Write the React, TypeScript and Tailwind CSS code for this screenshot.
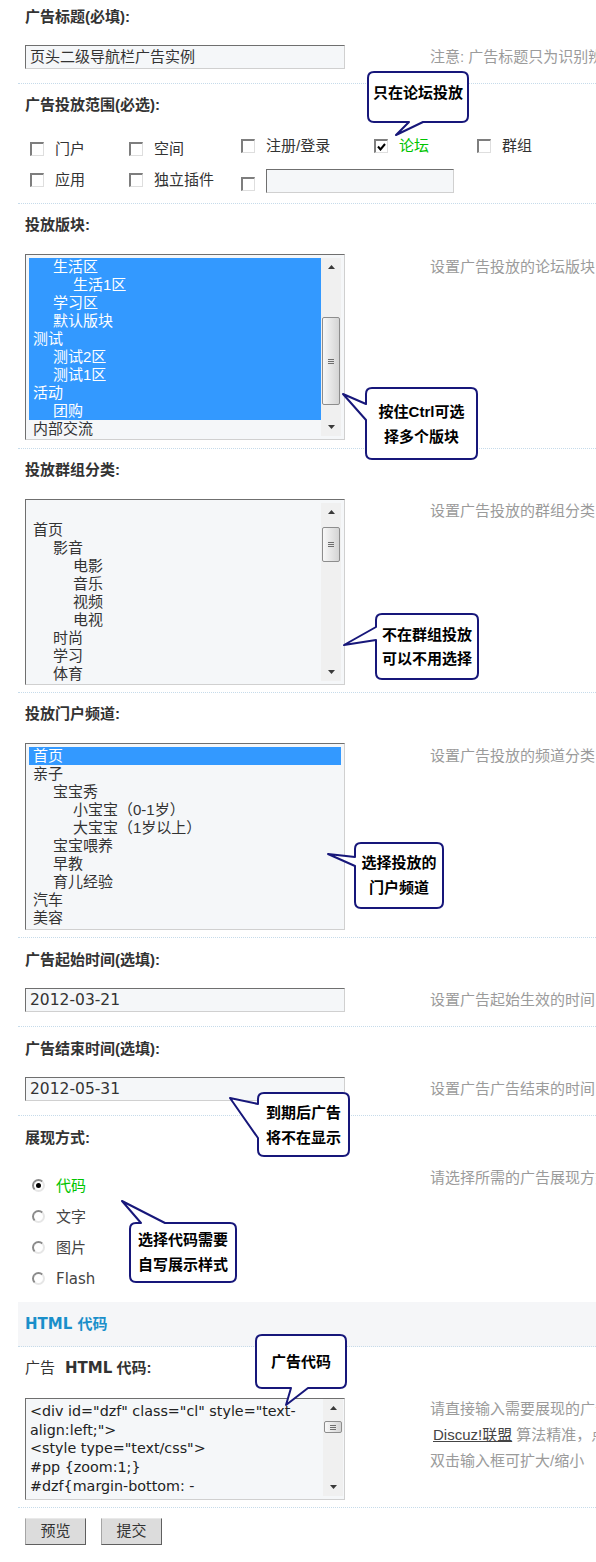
import React from "react";

const SANS = "font-['Liberation_Sans','Noto_Sans_CJK_SC',sans-serif]";
const DEJA = "font-['DejaVu_Sans','Noto_Sans_CJK_SC',sans-serif]";
const SEP = "border-b border-dotted border-[#c6dbea]";
const FIELD =
  "border border-t-[#6f6f6f] border-l-[#6f6f6f] border-r-[#d0d0d0] border-b-[#d0d0d0] bg-[#f5f7f9]";
const IND = ["pl-[4px]", "pl-[24px]", "pl-[44px]"];

function Label({ children }: { children: React.ReactNode }) {
  return (
    <div className="h-[18px] whitespace-nowrap text-[15px] font-bold leading-[18px] text-[#333]">
      {children}
    </div>
  );
}

function Hint({ children, cls }: { children: React.ReactNode; cls: string }) {
  return (
    <div className={`ml-[85px] shrink-0 whitespace-nowrap text-[15px] leading-[18px] text-[#9b9b9b] ${cls}`}>
      {children}
    </div>
  );
}

function Check({ on }: { on?: boolean }) {
  return (
    <span className="flex h-[14px] w-[14px] shrink-0 items-center justify-center border-b border-l-2 border-r border-t-2 border-b-[#dedede] border-l-[#7e7e7e] border-r-[#dedede] border-t-[#7e7e7e] bg-white">
      {on && (
        <svg width="9" height="8" viewBox="0 0 9 8">
          <path d="M1 3.5 L3.5 6.5 L8 1" fill="none" stroke="#000" strokeWidth="2" />
        </svg>
      )}
    </span>
  );
}

function Radio({ on }: { on?: boolean }) {
  return (
    <span className="flex h-[13px] w-[13px] shrink-0 items-center justify-center rounded-full border-2 border-b-[#e6e6e6] border-l-[#8a8a8a] border-r-[#e6e6e6] border-t-[#8a8a8a] bg-white">
      {on && <span className="h-[5px] w-[5px] rounded-full bg-black" />}
    </span>
  );
}

function Arrow({ down }: { down?: boolean }) {
  return (
    <div className="flex h-[18px] shrink-0 items-center justify-center">
      <svg width="7" height="4" viewBox="0 0 7 4">
        <path d={down ? "M0 0L3.5 4L7 0Z" : "M0 4L3.5 0L7 4Z"} fill="#3a3a3a" />
      </svg>
    </div>
  );
}

function ScrollBar({ thumb, cls }: { thumb: string; cls?: string }) {
  return (
    <div className={`flex w-[20px] shrink-0 flex-col bg-[#f0f0f0] ${cls ?? ""}`}>
      <Arrow />
      <div className="flex-1 px-[1px]">
        <div
          className={`flex w-full items-center justify-center rounded-[2px] border border-[#8d8d8d] bg-linear-to-r from-[#f8f8f8] to-[#d4d4d4] ${thumb}`}
        >
          <div className="flex flex-col gap-[1px]">
            <span className="block h-[1px] w-[6px] bg-[#6e6e6e]" />
            <span className="block h-[1px] w-[6px] bg-[#6e6e6e]" />
            <span className="block h-[1px] w-[6px] bg-[#6e6e6e]" />
          </div>
        </div>
      </div>
      <Arrow down />
    </div>
  );
}

type Item = { t: string; l: number; sel?: boolean };

function ListBox({ items, h, scroll }: { items: Item[]; h: string; scroll?: string }) {
  return (
    <div className={`flex w-[320px] shrink-0 p-[3px] ${h} ${FIELD}`}>
      <div className="flex-1 overflow-hidden">
        {items.map((it, i) => (
          <div
            key={i}
            className={`h-[18px] whitespace-nowrap text-[15px] leading-[18px] ${IND[it.l]} ${
              it.sel ? "bg-[#3399ff] text-white" : "text-[#333]"
            }`}
          >
            {it.t || "\u00a0"}
          </div>
        ))}
      </div>
      {scroll && <ScrollBar thumb={scroll} />}
    </div>
  );
}

function CItem({
  w,
  pad,
  label,
  on,
  green,
}: {
  w?: string;
  pad?: string;
  label: string;
  on?: boolean;
  green?: boolean;
}) {
  return (
    <div className={`flex h-[24px] shrink-0 items-center ${w ?? ""} ${pad ?? ""}`}>
      <Check on={on} />
      <span className={`ml-[11px] text-[15px] leading-[18px] ${green ? "text-[#00c400]" : "text-[#333]"}`}>
        {label}
      </span>
    </div>
  );
}

type Co = {
  x: number;
  y: number;
  w: number;
  h: number;
  side: "top" | "bottom" | "left";
  a: number;
  b: number;
  tx: number;
  ty: number;
  lines: string[];
  top: number;
  lh: number;
};

const callouts: Co[] = [
  { x: 368, y: 72, w: 100, h: 50, side: "bottom", a: 409, b: 423, tx: 396, ty: 135, lines: ["只在论坛投放"], top: 80, lh: 26 },
  { x: 366, y: 388, w: 111, h: 71, side: "left", a: 404, b: 420, tx: 343, ty: 394, lines: ["按住Ctrl可选", "择多个版块"], top: 399, lh: 25 },
  { x: 376, y: 614, w: 102, h: 65, side: "left", a: 627, b: 640, tx: 344, ty: 645, lines: ["不在群组投放", "可以不用选择"], top: 623, lh: 24 },
  { x: 355, y: 843, w: 88, h: 65, side: "left", a: 857, b: 866, tx: 328, ty: 854, lines: ["选择投放的", "门户频道"], top: 850, lh: 25 },
  { x: 258, y: 1093, w: 91, h: 63, side: "left", a: 1104, b: 1138, tx: 230, ty: 1098, lines: ["到期后广告", "将不在显示"], top: 1100, lh: 25 },
  { x: 130, y: 1223, w: 106, h: 59, side: "top", a: 141, b: 165, tx: 122, ty: 1201, lines: ["选择代码需要", "自写展示样式"], top: 1227, lh: 25 },
  { x: 256, y: 1335, w: 90, h: 53, side: "bottom", a: 291, b: 308, tx: 286, ty: 1405, lines: ["广告代码"], top: 1349, lh: 26 },
];

function calloutPath(c: Co) {
  const { x, y, w, h, side, a, b, tx, ty } = c;
  const r = 6;
  const R = x + w;
  const B = y + h;
  let d = `M${x + r} ${y}`;
  if (side === "top") d += ` L${a} ${y} L${tx} ${ty} L${b} ${y}`;
  d += ` L${R - r} ${y} Q${R} ${y} ${R} ${y + r} L${R} ${B - r} Q${R} ${B} ${R - r} ${B}`;
  if (side === "bottom") d += ` L${b} ${B} L${tx} ${ty} L${a} ${B}`;
  d += ` L${x + r} ${B} Q${x} ${B} ${x} ${B - r}`;
  if (side === "left") d += ` L${x} ${b} L${tx} ${ty} L${x} ${a}`;
  d += ` L${x} ${y + r} Q${x} ${y} ${x + r} ${y} Z`;
  return d;
}

const forum: Item[] = [
  { t: "生活区", l: 1, sel: true },
  { t: "生活1区", l: 2, sel: true },
  { t: "学习区", l: 1, sel: true },
  { t: "默认版块", l: 1, sel: true },
  { t: "测试", l: 0, sel: true },
  { t: "测试2区", l: 1, sel: true },
  { t: "测试1区", l: 1, sel: true },
  { t: "活动", l: 0, sel: true },
  { t: "团购", l: 1, sel: true },
  { t: "内部交流", l: 0 },
];

const groups: Item[] = [
  { t: "", l: 0 },
  { t: "首页", l: 0 },
  { t: "影音", l: 1 },
  { t: "电影", l: 2 },
  { t: "音乐", l: 2 },
  { t: "视频", l: 2 },
  { t: "电视", l: 2 },
  { t: "时尚", l: 1 },
  { t: "学习", l: 1 },
  { t: "体育", l: 1 },
];

const portal: Item[] = [
  { t: "首页", l: 0, sel: true },
  { t: "亲子", l: 0 },
  { t: "宝宝秀", l: 1 },
  { t: "小宝宝（0-1岁）", l: 2 },
  { t: "大宝宝（1岁以上）", l: 2 },
  { t: "宝宝喂养", l: 1 },
  { t: "早教", l: 1 },
  { t: "育儿经验", l: 1 },
  { t: "汽车", l: 0 },
  { t: "美容", l: 0 },
];

const code = [
  '<div id="dzf" class="cl" style="text-',
  'align:left;">',
  '<style type="text/css">',
  "#pp {zoom:1;}",
  "#dzf{margin-bottom: -",
];

const radios = [
  { t: "代码", on: true },
  { t: "文字" },
  { t: "图片" },
  { t: "Flash" },
];

export default function App() {
  return (
    <div className={`relative h-[1562px] w-[596px] overflow-hidden bg-white pl-[18px] ${SANS}`}>
      {/* 广告标题 */}
      <section className={`${SEP} pb-[14px] pl-[7px] pt-[8px]`}>
        <Label>广告标题(必填):</Label>
        <div className="mt-[19px] flex items-start">
          <div className={`h-[24px] w-[320px] shrink-0 pl-[4px] text-[15px] leading-[22px] text-[#333] ${FIELD}`}>
            页头二级导航栏广告实例
          </div>
          <Hint cls="mt-[3px]">注意: 广告标题只为识别辨别不同广告条目之用，并不在广告中显示</Hint>
        </div>
      </section>

      {/* 投放范围 */}
      <section className={`${SEP} pb-[9px] pl-[7px] pt-[12px]`}>
        <Label>广告投放范围(必选):</Label>
        <div className="mt-[20px] pl-[5px]">
          <div className="flex h-[24px] items-start">
            <CItem w="w-[99px]" pad="pt-[6px]" label="门户" />
            <CItem w="w-[112px]" pad="pt-[6px]" label="空间" />
            <CItem w="w-[133px]" label="注册/登录" />
            <CItem w="w-[103px]" label="论坛" on green />
            <CItem label="群组" />
          </div>
          <div className="mt-[12px] flex h-[24px] items-start">
            <CItem w="w-[99px]" pad="pb-[4px]" label="应用" />
            <CItem w="w-[112px]" pad="pb-[4px]" label="独立插件" />
            <div className="flex items-start">
              <span className="mt-[7px]">
                <Check />
              </span>
              <div className={`-mt-[1px] ml-[11px] h-[24px] w-[188px] ${FIELD}`} />
            </div>
          </div>
        </div>
      </section>

      {/* 投放版块 */}
      <section className={`${SEP} pb-[8px] pl-[7px] pt-[12px]`}>
        <Label>投放版块:</Label>
        <div className="mt-[20px] flex items-start">
          <ListBox items={forum} h="h-[186px]" scroll="mt-[41px] h-[88px]" />
          <Hint cls="mt-[4px]">设置广告投放的论坛版块</Hint>
        </div>
      </section>

      {/* 投放群组分类 */}
      <section className={`${SEP} pb-[7px] pl-[7px] pt-[12px]`}>
        <Label>投放群组分类:</Label>
        <div className="mt-[20px] flex items-start">
          <ListBox items={groups} h="h-[186px]" scroll="mt-[6px] h-[35px]" />
          <Hint cls="mt-[3px]">设置广告投放的群组分类</Hint>
        </div>
      </section>

      {/* 投放门户频道 */}
      <section className={`${SEP} pb-[7px] pl-[7px] pt-[12px]`}>
        <Label>投放门户频道:</Label>
        <div className="mt-[20px] flex items-start">
          <ListBox items={portal} h="h-[187px]" />
          <Hint cls="mt-[4px]">设置广告投放的频道分类</Hint>
        </div>
      </section>

      {/* 起始时间 */}
      <section className={`${SEP} pb-[14px] pl-[7px] pt-[13px]`}>
        <Label>广告起始时间(选填):</Label>
        <div className="mt-[19px] flex items-start">
          <div className={`h-[24px] w-[320px] shrink-0 pl-[4px] text-[15.5px] leading-[22px] text-[#333] ${FIELD} ${DEJA}`}>
            2012-03-21
          </div>
          <Hint cls="mt-[3px]">设置广告起始生效的时间</Hint>
        </div>
      </section>

      {/* 结束时间 */}
      <section className={`${SEP} pb-[14px] pl-[7px] pt-[13px]`}>
        <Label>广告结束时间(选填):</Label>
        <div className="mt-[19px] flex items-start">
          <div className={`h-[24px] w-[320px] shrink-0 pl-[4px] text-[15.5px] leading-[22px] text-[#333] ${FIELD} ${DEJA}`}>
            2012-05-31
          </div>
          <Hint cls="mt-[3px]">设置广告广告结束的时间</Hint>
        </div>
      </section>

      {/* 展现方式 */}
      <section className="pb-[8px] pl-[7px] pt-[13px]">
        <Label>展现方式:</Label>
        <div className="mt-[23px] flex items-start">
          <div className="w-[320px] shrink-0 pl-[7px]">
            {radios.map((r) => (
              <div key={r.t} className="flex h-[31px] items-center">
                <Radio on={r.on} />
                <span
                  className={`ml-[11px] text-[15px] leading-[18px] ${r.on ? "text-[#00c400]" : "text-[#444]"} ${
                    r.t === "Flash" ? DEJA : ""
                  }`}
                >
                  {r.t}
                </span>
              </div>
            ))}
          </div>
          <Hint cls="-mt-[1px]">请选择所需的广告展现方式</Hint>
        </div>
      </section>

      {/* HTML 代码 band */}
      <div className={`flex h-[45px] items-center bg-[#f5f6f8] pl-[7px] ${SEP}`}>
        <span className={`text-[15px] font-bold text-[#1a8fca] ${DEJA}`}>HTML 代码</span>
      </div>

      {/* 广告 HTML 代码 */}
      <section className={`${SEP} pb-[7px] pl-[7px] pt-[12px]`}>
        <Label>
          <span className="font-normal">广告</span>
          <span className={`ml-[10px] ${DEJA}`}>HTML</span> 代码:
        </Label>
        <div className="mt-[21px] flex items-start">
          <div className={`flex h-[102px] w-[320px] shrink-0 ${FIELD}`}>
            <div className={`flex-1 overflow-hidden whitespace-pre pl-[4px] pt-[3px] text-[14.3px] leading-[18.7px] text-[#222] ${DEJA}`}>
              {code.map((l, i) => (
                <div key={i}>{l}</div>
              ))}
            </div>
            <ScrollBar thumb="mt-[4px] h-[12px]" cls="mb-[3px] mr-[1px]" />
          </div>
          <div className="-mt-[2px] ml-[85px] shrink-0 whitespace-nowrap text-[15px] leading-[26px] text-[#9b9b9b]">
            <div>请直接输入需要展现的广告代码</div>
            <div className="pl-[3px]">
              <span className="text-[#444] underline">Discuz!联盟</span> 算法精准，点击率高
            </div>
            <div>双击输入框可扩大/缩小</div>
          </div>
        </div>
      </section>

      {/* buttons */}
      <div className="flex gap-[15px] pl-[7px] pt-[10px]">
        {["预览", "提交"].map((t) => (
          <button
            key={t}
            className="h-[27px] w-[61px] border border-b-[#5f5f5f] border-l-[#a5a5a5] border-r-[#5f5f5f] border-t-[#e9e9e9] bg-[#dcdcdc] text-[15px] text-[#333]"
          >
            {t}
          </button>
        ))}
      </div>

      {/* callouts */}
      <svg className="pointer-events-none absolute left-0 top-0" width={596} height={1562}>
        {callouts.map((c, i) => (
          <path key={i} d={calloutPath(c)} fill="#fff" stroke="#17177a" strokeWidth={2} strokeLinejoin="round" />
        ))}
      </svg>
      {callouts.map((c, i) => (
        <div
          key={i}
          className="pointer-events-none absolute whitespace-nowrap text-center text-[15px] font-bold text-black"
          style={{ left: c.x, width: c.w, top: c.top, lineHeight: `${c.lh}px` }}
        >
          {c.lines.map((l) => (
            <div key={l}>{l}</div>
          ))}
        </div>
      ))}
    </div>
  );
}
